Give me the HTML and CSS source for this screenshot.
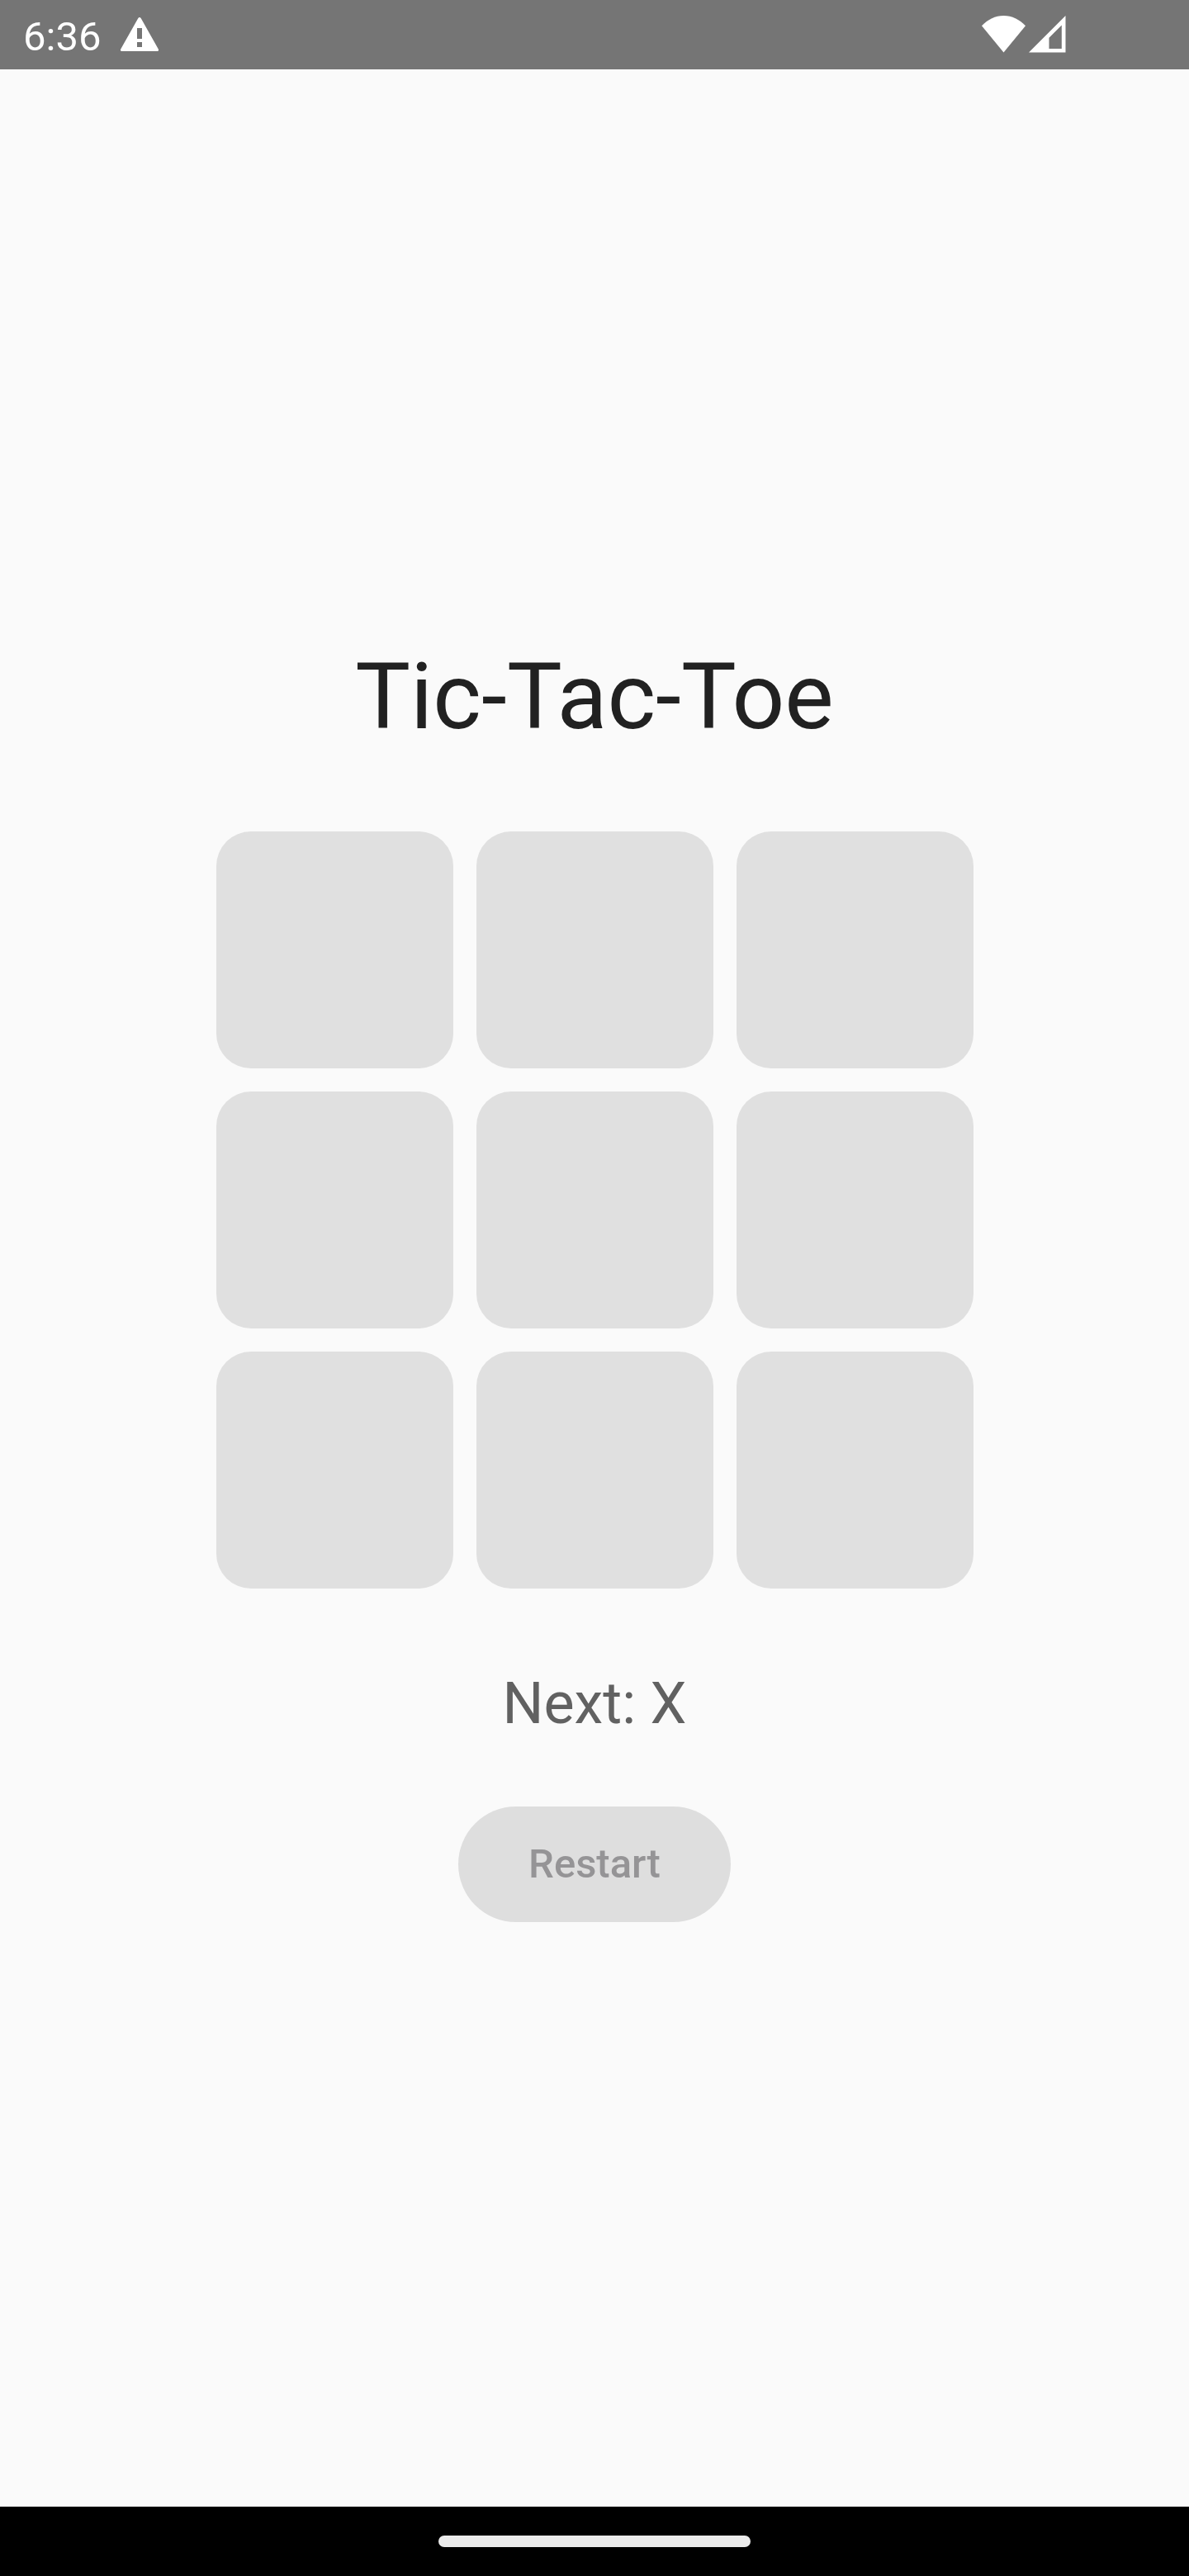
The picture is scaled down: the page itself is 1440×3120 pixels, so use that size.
FILE: index.html
```html
<!DOCTYPE html>
<html lang="en">
<head>
<meta charset="utf-8">
<title>Tic-Tac-Toe</title>
<link rel="stylesheet" href="styles.css">
</head>
<body>
<div class="screen">
  <header class="status-bar">
    <div class="status-left">
      <span class="clock">6:36</span>
      <svg class="warning-icon" width="48" height="42" viewBox="0 0 48 42" aria-hidden="true">
        <path fill="#fff" fill-rule="evenodd" d="M22.2 1.2Q24 -1.2 25.8 1.2L46.8 38.6Q47.8 41 45.3 41H2.7Q.2 41 1.2 38.6ZM21 13V26H27V13ZM21 30V36H27V30Z"/>
      </svg>
    </div>
    <div class="status-right">
      <svg class="wifi-icon" width="54" height="45" viewBox="0 0 54 45" aria-hidden="true">
        <path fill="#fff" d="M0 12.2C7.500 4.500 16.500 0 26.500 0S45.500 4.500 53 12.200L26.500 44.500Z"/>
      </svg>
      <svg class="signal-icon" width="45" height="45" viewBox="0 0 45 45" aria-hidden="true">
        <path fill="#fff" fill-rule="evenodd" d="M44.500 0V44.500H0ZM39.800 11.400L24.500 26.700V40H39.800Z"/>
      </svg>
    </div>
  </header>
  <main class="game">
    <h1 class="title">Tic-Tac-Toe</h1>
    <div class="board">
      <div class="cell"></div><div class="cell"></div><div class="cell"></div>
      <div class="cell"></div><div class="cell"></div><div class="cell"></div>
      <div class="cell"></div><div class="cell"></div><div class="cell"></div>
    </div>
    <p class="turn">Next: X</p>
    <button class="restart" type="button" disabled>Restart</button>
  </main>
  <footer class="nav-bar"><div class="nav-handle"></div></footer>
</div>
</body>
</html>
```
FILE: styles.css
```css
* {
  box-sizing: border-box;
}

body {
  margin: 0;
  font-family: Roboto, sans-serif;
}

.screen {
  display: flex;
  flex-direction: column;
  width: 1440px;
  height: 3120px;
  background: #fafafa;
}

.status-bar {
  display: flex;
  justify-content: space-between;
  flex: none;
  height: 84px;
  padding: 0 149px 0 28px;
  background: #757575;
}

.status-left,
.status-right {
  display: flex;
  align-items: flex-start;
}

.clock {
  width: 95px;
  margin-top: 16px;
  color: #fff;
  font-size: 49px;
  line-height: 58px;
}

.warning-icon {
  margin: 21px 0 0 22px;
}

.wifi-icon {
  margin: 19px 3px 0 0;
}

.signal-icon {
  margin-top: 19px;
}

.game {
  display: flex;
  flex: 1;
  flex-direction: column;
  align-items: center;
  padding-top: 690px;
}

.title {
  margin: 0 0 93px;
  color: #212121;
  font-size: 112px;
  font-weight: 400;
  line-height: 140px;
}

.board {
  display: grid;
  grid-template-columns: repeat(3, 287px);
  grid-auto-rows: 287px;
  gap: 28px;
  margin-left: 1px;
}

.cell {
  border-radius: 42px;
  background: #e0e0e0;
}

.turn {
  margin: 90px 0 76px;
  color: #616161;
  font-size: 70px;
  line-height: 98px;
}

.restart {
  width: 330px;
  height: 140px;
  padding: 0;
  border: 0;
  border-radius: 70px;
  background: #dedede;
  color: #959496;
  font: 500 49px/70px Roboto, sans-serif;
}

.nav-bar {
  display: flex;
  flex: none;
  justify-content: center;
  height: 84px;
  padding-top: 35px;
  background: #000;
}

.nav-handle {
  width: 378px;
  height: 14px;
  border-radius: 7px;
  background: #ebebeb;
}
```
